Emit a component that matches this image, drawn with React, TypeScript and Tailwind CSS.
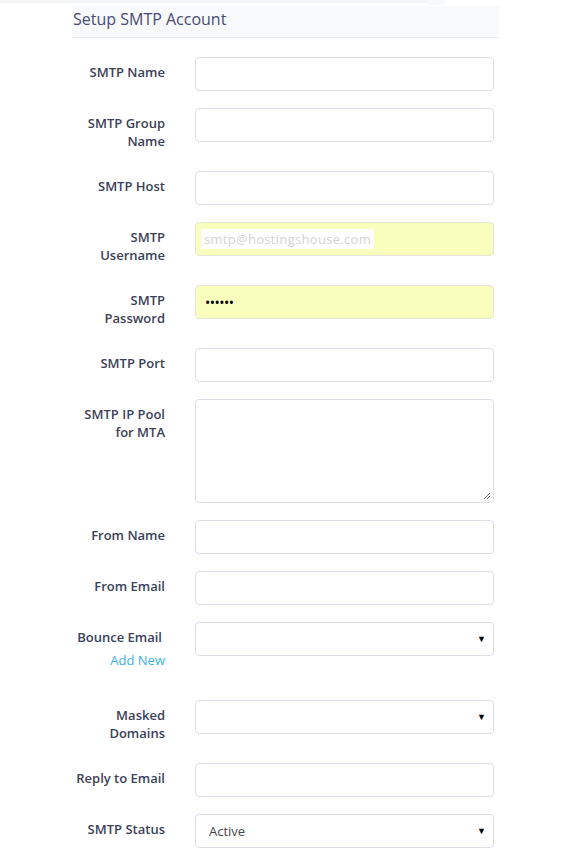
const labelCls =
  "w-[123px] shrink-0 pr-[30px] pt-[6px] pb-[4px] text-right text-[13px] font-semibold leading-[18px] text-[#3c3f58]"

const inputCls =
  "h-[34px] w-[299px] rounded-[4px] border border-[#dcdfe7] bg-white px-3 text-[13px] text-[#444]"

function Row({ label, children, extra }: { label: React.ReactNode; children: React.ReactNode; extra?: string }) {
  return (
    <div className="mb-[17px] flex items-start">
      <div className={labelCls + (extra ? " " + extra : "")}>{label}</div>
      {children}
    </div>
  )
}

function Select({ value }: { value?: string }) {
  return (
    <div className={inputCls + " flex items-center justify-between pr-[7px]"}>
      <span className="pl-[1px] pt-[1px]">{value ?? ""}</span>
      <span className="text-[9px] text-black">▼</span>
    </div>
  )
}

export default function App() {
  return (
    <div className="min-h-[858px] bg-white font-['Open_Sans',sans-serif]">
      <div className="flex h-[5px]">
        <div className="h-[3px] w-[429px] bg-[#f4f5f7]"></div>
        <div className="h-[5px] w-[16px] bg-[#f8f9fa]"></div>
      </div>
      <div className="ml-[72px] w-[427px]">
        <div className="mt-[1px] h-[32px] border-b border-[#e6e8ec] bg-[#f8f9fb] pl-[1px] pt-[2px] text-[16px] leading-[22px] text-[#484b74]">
          Setup SMTP Account
        </div>
        <div className="pt-[19px]">
          <Row label="SMTP Name">
            <div className={inputCls}></div>
          </Row>
          <Row label={<>SMTP Group<br />Name</>}>
            <div className={inputCls}></div>
          </Row>
          <Row label="SMTP Host">
            <div className={inputCls}></div>
          </Row>
          <Row label={<>SMTP<br />Username</>}>
            <div className={inputCls + " flex items-center !border-[#e3e6d8] !bg-[#fafebd] !px-[5px]"}>
              <span className="bg-white px-[3px] text-[13px] leading-[20px] tracking-[0.3px] text-[#d4d4d4]">smtp@hostingshouse.com</span>
            </div>
          </Row>
          <Row label={<>SMTP<br />Password</>}>
            <div className={inputCls + " flex items-center !border-[#e3e6d8] !bg-[#fafebd] !pl-[9px] text-black"}>
              <span className="text-[14px] tracking-[-0.5px]">••••••</span>
            </div>
          </Row>
          <Row label="SMTP Port">
            <div className={inputCls}></div>
          </Row>
          <Row label={<>SMTP IP Pool<br />for MTA</>}>
            <div className="relative h-[104px] w-[299px] rounded-[4px] border border-[#dcdfe7] bg-white">
              <svg className="absolute bottom-[2px] right-[2px]" width="8" height="8" viewBox="0 0 8 8">
                <path d="M7 1 L1 7 M7 4 L4 7" stroke="#777" strokeWidth="1" />
              </svg>
            </div>
          </Row>
          <Row label="From Name">
            <div className={inputCls}></div>
          </Row>
          <Row label="From Email">
            <div className={inputCls}></div>
          </Row>
          <Row
            label={
              <>
                <div className="pr-[3px]">Bounce Email</div>
                <div className="mt-[5px] font-normal text-[#3cb0e0]">Add New</div>
              </>
            }
            extra="min-h-[61px]"
          >
            <Select />
          </Row>
          <Row label={<>Masked<br />Domains</>}>
            <Select />
          </Row>
          <Row label="Reply to Email">
            <div className={inputCls}></div>
          </Row>
          <Row label="SMTP Status">
            <Select value="Active" />
          </Row>
        </div>
      </div>
    </div>
  )
}
